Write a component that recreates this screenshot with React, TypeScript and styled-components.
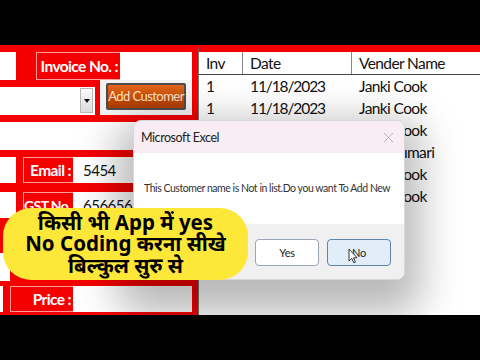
import { FC } from "react";
import styled, { createGlobalStyle } from "styled-components";

const GlobalStyle = createGlobalStyle`
  html, body {
    margin: 0;
    padding: 0;
    background: #000;
  }
  * {
    box-sizing: border-box;
  }
`;

const RED = "#f40000";
const UI_FONT = `"Lato", "Liberation Sans", sans-serif`;

const Frame = styled.div`
  width: 480px;
  height: 360px;
  display: flex;
  flex-direction: column;
  background: #000;
  overflow: hidden;
`;

const Letterbox = styled.div`
  height: 45px;
  flex: none;
  background: #000;
`;

const Screen = styled.div`
  position: relative;
  height: 270px;
  display: grid;
  grid-template-columns: 198px 1fr;
  overflow: hidden;
  background: #fff;
`;

const FormPanel = styled.div`
  background: ${RED};
  display: flex;
  flex-direction: column;
  padding-top: 7px;
  font-family: ${UI_FONT};
`;

const FormRow = styled.div<{ $top?: number; $height: number }>`
  display: flex;
  align-items: stretch;
  height: ${(p) => p.$height}px;
  margin-top: ${(p) => p.$top ?? 0}px;
`;

const Stub = styled.div<{ $width: number }>`
  width: ${(p) => p.$width}px;
  background: #fff;
  flex: none;
`;

const Spacer = styled.div<{ $width: number }>`
  width: ${(p) => p.$width}px;
  flex: none;
`;

const Label = styled.div<{ $width: number; $size?: number }>`
  width: ${(p) => p.$width}px;
  flex: none;
  display: flex;
  align-items: center;
  justify-content: flex-end;
  padding-right: 2px;
  background: ${RED};
  border: 1px solid #ff9c9c;
  border-right: none;
  color: #fff;
  font-weight: 700;
  font-size: ${(p) => p.$size ?? 15.5}px;
  letter-spacing: -0.6px;
  white-space: nowrap;
`;

const Field = styled.div<{ $width: number }>`
  width: ${(p) => p.$width}px;
  flex: none;
  display: flex;
  align-items: center;
  padding-left: 10px;
  background: #fff;
  color: #111;
  font-size: 15px;
  letter-spacing: -0.5px;
`;

const Combo = styled.div`
  width: 95px;
  height: 28px;
  margin-top: 7px;
  background: #fff;
  display: flex;
  justify-content: flex-end;
  align-items: stretch;
  padding: 1px 2px 2px 0;
`;

const ComboArrow = styled.div`
  width: 13px;
  background: linear-gradient(#fafafa, #dcdcdc);
  border: 1px solid #b8b8b8;
  display: flex;
  align-items: center;
  justify-content: center;
  &::after {
    content: "";
    border-left: 3px solid transparent;
    border-right: 3px solid transparent;
    border-top: 4px solid #111;
  }
`;

const ButtonPanel = styled.div`
  width: 92px;
  margin-left: 5px;
  background: #f4f4f4;
  display: flex;
  align-items: center;
  justify-content: center;
  padding-bottom: 3px;
`;

const AddButton = styled.div`
  width: 80px;
  height: 27px;
  border: 2px solid #4d4d4d;
  border-radius: 2px;
  background: linear-gradient(#e4671c, #c34a05 60%, #a83c00);
  color: #fde3cf;
  font-size: 13px;
  letter-spacing: -0.55px;
  white-space: nowrap;
  display: flex;
  align-items: center;
  justify-content: center;
`;

const TablePanel = styled.div`
  border-top: 7px solid ${RED};
  border-left: 1px solid #777;
  background: #fff;
  font-family: ${UI_FONT};
  font-size: 15.5px;
  color: #111;
`;

const GridRow = styled.div<{ $header?: boolean }>`
  display: grid;
  grid-template-columns: 44px 109px 1fr;
  height: ${(p) => (p.$header ? 23 : 22)}px;
  border-bottom: ${(p) => (p.$header ? "1px solid #444" : "none")};
`;

const Cell = styled.div<{ $divider?: boolean; $tight?: boolean }>`
  display: flex;
  align-items: center;
  padding-left: 7px;
  white-space: nowrap;
  letter-spacing: ${(p) => (p.$tight ? -1.1 : -0.6)}px;
  border-right: ${(p) => (p.$divider ? "1px solid #888" : "none")};
`;

const Dialog = styled.div`
  position: absolute;
  left: 133px;
  top: 75px;
  width: 272px;
  height: 160px;
  border-radius: 8px;
  overflow: hidden;
  background: #fff;
  border: 1px solid #d8d8d8;
  box-shadow: 0 18px 40px 16px rgba(0, 0, 0, 0.28);
  display: flex;
  flex-direction: column;
  font-family: ${UI_FONT};
`;

const TitleBar = styled.div`
  height: 32px;
  flex: none;
  background: #f8edf2;
  display: flex;
  align-items: center;
  justify-content: space-between;
  padding: 0 10px 0 7px;
  font-size: 12.5px;
  letter-spacing: -0.45px;
  color: #222;
`;

const Message = styled.div`
  flex: 1;
  padding: 29px 0 0 10px;
  font-size: 10.5px;
  letter-spacing: -0.45px;
  color: #333;
  white-space: nowrap;
`;

const Footer = styled.div`
  height: 55px;
  flex: none;
  background: #f0f0f0;
  display: flex;
  align-items: flex-start;
  padding: 15px 0 0 121px;
  gap: 8px;
`;

const DialogButton = styled.div<{ $focused?: boolean }>`
  width: 64px;
  height: 27px;
  border-radius: 4px;
  border: 1px solid ${(p) => (p.$focused ? "#5f84ad" : "#9aa6b2")};
  background: ${(p) => (p.$focused ? "#e1eefa" : "#fff")};
  display: flex;
  align-items: center;
  justify-content: center;
  font-size: 11px;
  letter-spacing: -0.3px;
  color: #222;
`;

const Banner = styled.div`
  position: absolute;
  left: 3px;
  top: 163px;
  width: 245px;
  height: 72px;
  border-radius: 28px;
  background: #fde83a;
  display: flex;
  flex-direction: column;
  align-items: center;
  justify-content: center;
  font-family: "Noto Sans", "Noto Sans Devanagari", "Lohit Devanagari", sans-serif;
  font-weight: 700;
  font-size: 20.5px;
  line-height: 21.5px;
  color: #000;
  white-space: nowrap;
`;

const Pointer = styled.svg`
  position: absolute;
  left: 348px;
  top: 203px;
`;

type Row = [string, string, string];

const rows: Row[] = [
  ["1", "11/18/2023", "Janki Cook"],
  ["1", "11/18/2023", "Janki Cook"],
  ["1", "11/18/2023", "Janki Cook"],
  ["1", "11/18/2023", "Rani Kumari"],
  ["1", "11/18/2023", "Janki Cook"],
  ["1", "11/18/2023", "Janki Cook"],
];

const Form: FC = () => (
  <FormPanel>
    <FormRow $height={28}>
      <Stub $width={16} />
      <Spacer $width={20} />
      <Label $width={84}>Invoice No. :</Label>
      <Field $width={72} />
    </FormRow>
    <FormRow $height={35}>
      <Combo>
        <ComboArrow />
      </Combo>
      <ButtonPanel>
        <AddButton>Add Customer</AddButton>
      </ButtonPanel>
    </FormRow>
    <FormRow $top={7} $height={28}>
      <Field $width={192} />
    </FormRow>
    <FormRow $top={7} $height={26}>
      <Stub $width={16} />
      <Spacer $width={7} />
      <Label $width={50}>Email :</Label>
      <Field $width={119}>5454</Field>
    </FormRow>
    <FormRow $top={9} $height={26}>
      <Stub $width={16} />
      <Spacer $width={7} />
      <Label $width={50} $size={14}>
        GST No.
      </Label>
      <Field $width={119}>656656</Field>
    </FormRow>
    <FormRow $top={35} $height={28}>
      <Stub $width={10} />
    </FormRow>
    <FormRow $top={5} $height={26}>
      <Stub $width={3} />
      <Spacer $width={7} />
      <Label $width={63}>Price :</Label>
      <Field $width={119} />
    </FormRow>
  </FormPanel>
);

const Table: FC = () => (
  <TablePanel>
    <GridRow $header>
      <Cell $divider>Inv</Cell>
      <Cell $divider>Date</Cell>
      <Cell>Vender Name</Cell>
    </GridRow>
    {rows.map((r, i) => (
      <GridRow key={i}>
        <Cell>{r[0]}</Cell>
        <Cell $tight>{r[1]}</Cell>
        <Cell>{r[2]}</Cell>
      </GridRow>
    ))}
  </TablePanel>
);

const App: FC = () => (
  <>
    <GlobalStyle />
    <Frame>
      <Letterbox />
      <Screen>
        <Form />
        <Table />
        <Dialog>
          <TitleBar>
            Microsoft Excel
            <svg width="11" height="11" viewBox="0 0 11 11">
              <path d="M1 1 L10 10 M10 1 L1 10" stroke="#b3b3b3" strokeWidth="1" />
            </svg>
          </TitleBar>
          <Message>This Customer name is Not in list.Do you want To Add New</Message>
          <Footer>
            <DialogButton>Yes</DialogButton>
            <DialogButton $focused>No</DialogButton>
          </Footer>
        </Dialog>
        <Banner>
          <span>किसी भी App में yes</span>
          <span>No Coding करना सीखे</span>
          <span>बिल्कुल सुरु से</span>
        </Banner>
        <Pointer width="10" height="16" viewBox="0 0 10 16">
          <path
            d="M1 1 L1 13 L3.8 10.4 L5.8 14.8 L7.4 14.1 L5.5 9.8 L9 9.8 Z"
            fill="#fff"
            stroke="#222"
            strokeWidth="0.9"
            strokeLinejoin="round"
          />
        </Pointer>
      </Screen>
      <Letterbox />
    </Frame>
  </>
);

export default App;
